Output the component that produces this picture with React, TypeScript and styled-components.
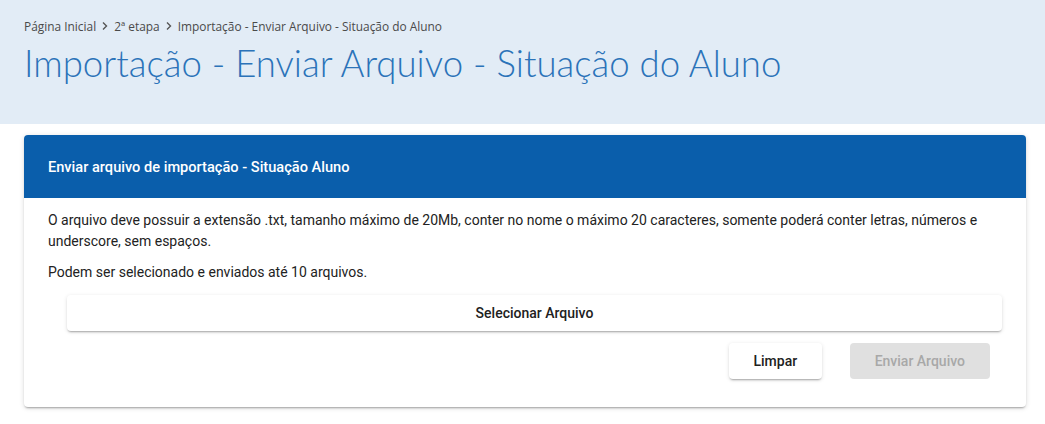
import React from "react";
import styled, { createGlobalStyle } from "styled-components";

const GlobalStyle = createGlobalStyle`
  html, body {
    margin: 0;
    padding: 0;
    background: #ffffff;
  }
  body {
    font-family: Roboto, "Liberation Sans", sans-serif;
  }
`;

const Page = styled.div`
  width: 1045px;
  min-height: 424px;
  background: #ffffff;
`;

const Banner = styled.header`
  background: #e2ecf6;
  height: 124px;
  padding: 17px 24px 0;
  box-sizing: border-box;
`;

const Breadcrumb = styled.nav`
  display: flex;
  align-items: center;
  gap: 5px;
  font-family: "Open Sans", "Liberation Sans", sans-serif;
  font-size: 11.9px;
  color: #4a4a4a;
  line-height: 18px;
`;

const Chevron = () => (
  <svg width="8" height="10" viewBox="0 0 8 10">
    <path d="M2 1.5 L5.5 5 L2 8.5" fill="none" stroke="#555" strokeWidth="1.4" />
  </svg>
);

const Title = styled.h1`
  margin: 5px 0 0;
  font-family: Lato, "Open Sans", sans-serif;
  font-weight: 300;
  font-size: 36.6px;
  line-height: 46px;
  color: #2b73b9;
`;

const Content = styled.main`
  padding: 11px 19px 16px 24px;
`;

const Card = styled.section`
  background: #ffffff;
  border-radius: 4px;
  box-shadow: 0 2px 2px -1px rgba(0, 0, 0, 0.3), 0 1px 5px 0 rgba(0, 0, 0, 0.15);
  overflow: hidden;
`;

const CardHeader = styled.div`
  background: #0a5eab;
  height: 63px;
  display: flex;
  align-items: center;
  padding: 0 24px;
  color: #ffffff;
  font-size: 14.6px;
  font-weight: 500;
`;

const CardBody = styled.div`
  padding: 12px 24px 28px;
`;

const Text = styled.p`
  margin: 0 0 10px;
  font-size: 14px;
  line-height: 21px;
  color: #222;
`;

const SelectRow = styled.div`
  padding: 2px 0 0 19px;
`;

const Button = styled.button<{ $disabled?: boolean; $wide?: boolean }>`
  height: 36px;
  border: none;
  border-radius: 4px;
  font-family: Roboto, sans-serif;
  font-size: 14px;
  font-weight: 500;
  cursor: pointer;
  width: ${(p) => (p.$wide ? "100%" : "auto")};
  padding: 0 ${(p) => (p.$disabled ? "25px" : "24.5px")};
  background: ${(p) => (p.$disabled ? "#e0e0e0" : "#ffffff")};
  color: ${(p) => (p.$disabled ? "#a8a8a8" : "#212121")};
  box-shadow: ${(p) =>
    p.$disabled
      ? "none"
      : "0 2px 2px -1px rgba(0,0,0,0.3), 0 1px 4px 0 rgba(0,0,0,0.12)"};
`;

const Actions = styled.div`
  display: flex;
  justify-content: flex-end;
  gap: 28px;
  padding: 12px 12px 0 0;
`;

export default function App() {
  return (
    <Page>
      <GlobalStyle />
      <Banner>
        <Breadcrumb>
          <span>Página Inicial</span>
          <Chevron />
          <span>2ª etapa</span>
          <Chevron />
          <span>Importação - Enviar Arquivo - Situação do Aluno</span>
        </Breadcrumb>
        <Title>Importação - Enviar Arquivo - Situação do Aluno</Title>
      </Banner>
      <Content>
        <Card>
          <CardHeader>Enviar arquivo de importação - Situação Aluno</CardHeader>
          <CardBody>
            <Text>
              O arquivo deve possuir a extensão .txt, tamanho máximo de 20Mb, conter no nome o
              máximo 20 caracteres, somente poderá conter letras, números e underscore, sem
              espaços.
            </Text>
            <Text>Podem ser selecionado e enviados até 10 arquivos.</Text>
            <SelectRow>
              <Button $wide>Selecionar Arquivo</Button>
            </SelectRow>
            <Actions>
              <Button>Limpar</Button>
              <Button $disabled disabled>
                Enviar Arquivo
              </Button>
            </Actions>
          </CardBody>
        </Card>
      </Content>
    </Page>
  );
}
